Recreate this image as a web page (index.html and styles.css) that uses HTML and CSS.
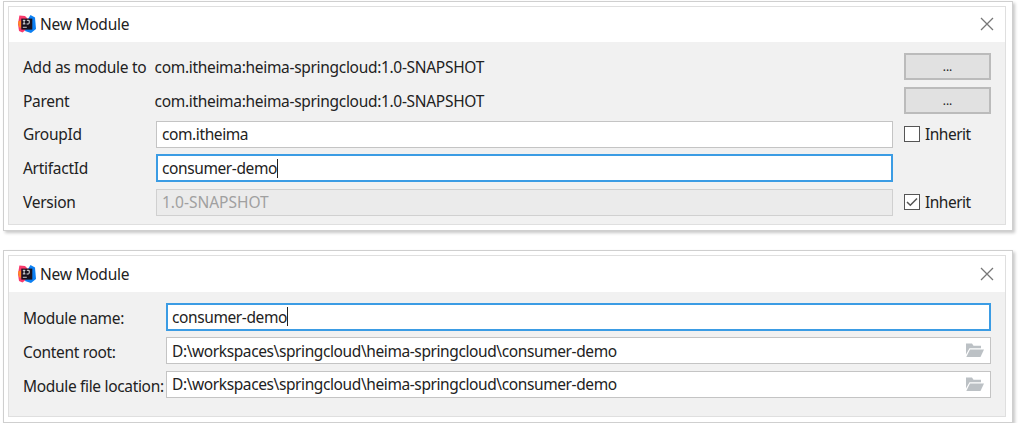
FILE: index.html
```html
<!DOCTYPE html>
<html lang="en">
<head>
<meta charset="utf-8">
<title>New Module</title>
<link rel="stylesheet" href="styles.css">
</head>
<body>
<svg class="defs" width="0" height="0">
  <symbol id="logo" viewBox="0 0 18 18">
    <path fill="#fa3a6c" d="M1.400.5 7 1l4 4-1 8-5.500 4.500L1 16 0 9z"/>
    <path fill="#ff8a24" d="M0 6.500 3 5.500V13L1 12z"/>
    <path fill="#0c7ff2" d="M12.500 0 17 2.500 18 14l-5 4-6-2 3-12z"/>
    <path fill="#16101c" d="M3.300 3.600h11v11h-11z"/>
    <path fill="none" stroke="#fff" stroke-width=".9" d="M4.800 5.300h2.600M6.100 5.300v3.600M4.800 8.900h2.600M8.800 5.300h2.400v2.800q0 .9-1 .9H8.600"/>
    <path fill="#ddd" d="M4.800 11.800h4v.9h-4z"/>
  </symbol>
  <symbol id="close" viewBox="0 0 14 14">
    <path fill="none" stroke="#777" stroke-width="1.300" d="m1 1 12 12M13 1 1 13"/>
  </symbol>
  <symbol id="folder" viewBox="0 0 19 15">
    <path fill="#bcc1c5" d="M1 .5h6l1.500 2.300H16v2.400H4.500L1 11.500z"/>
    <path fill="#bcc1c5" d="M5 6.500h14L15.500 14H1.300z"/>
  </symbol>
</svg>
<main class="page">
  <section class="dialog dialog-artifact">
    <div class="window">
      <header class="titlebar">
        <svg class="logo"><use href="#logo"/></svg>
        <h1 class="title">New Module</h1>
        <svg class="close"><use href="#close"/></svg>
      </header>
      <div class="form">
        <div class="row"><span class="label">Add as module to</span><span class="value">com.itheima:heima-springcloud:1.0-SNAPSHOT</span><button class="more">...</button></div>
        <div class="row"><span class="label">Parent</span><span class="value">com.itheima:heima-springcloud:1.0-SNAPSHOT</span><button class="more">...</button></div>
        <div class="row"><span class="label">GroupId</span><div class="field">com.itheima</div><div class="check"><span class="box"></span>Inherit</div></div>
        <div class="row"><span class="label">ArtifactId</span><div class="field focused">consumer-demo<i class="caret"></i></div><div class="check"></div></div>
        <div class="row"><span class="label">Version</span><div class="field disabled">1.0-SNAPSHOT</div><div class="check"><span class="box"><svg class="tick" viewBox="0 0 14 14"><path fill="none" stroke="#555" stroke-width="1.500" d="m2 7 3.300 3.300L12 3.500"/></svg></span>Inherit</div></div>
      </div>
    </div>
  </section>
  <section class="dialog dialog-location">
    <div class="window">
      <header class="titlebar">
        <svg class="logo"><use href="#logo"/></svg>
        <h1 class="title">New Module</h1>
        <svg class="close"><use href="#close"/></svg>
      </header>
      <div class="form">
        <div class="row"><span class="label">Module name:</span><div class="field focused">consumer-demo<i class="caret"></i></div></div>
        <div class="row"><span class="label">Content root:</span><div class="field"><span class="path">D:\workspaces\springcloud\heima-springcloud\consumer-demo</span><svg class="folder"><use href="#folder"/></svg></div></div>
        <div class="row"><span class="label">Module file location:</span><div class="field"><span class="path">D:\workspaces\springcloud\heima-springcloud\consumer-demo</span><svg class="folder"><use href="#folder"/></svg></div></div>
      </div>
    </div>
  </section>
</main>
</body>
</html>
```

FILE: styles.css
```css
* { box-sizing: border-box; }
body {
  margin: 0;
  background: #fff;
  color: #222;
  font: 15.5px/20px "Noto Sans", "Open Sans", sans-serif;
  overflow: hidden;
}
.defs { position: absolute; }
.page { display: flex; flex-direction: column; gap: 19px; padding: 1px 9px 0 3px; }
.dialog {
  border: 1px solid #cfcfcf;
  padding: 4px 6px 5px 4px;
  background: #fff;
  box-shadow: 2px 2px 3px rgba(0, 0, 0, .22);
}
.dialog-artifact { height: 230px; }
.dialog-location { height: 173px; }
.window { height: 100%; border: 1px solid #dfdfdf; background: #f1f1f1; }
.titlebar { display: flex; align-items: center; height: 35px; padding: 0 11px 2px 9px; background: #fff; }
.dialog-location .titlebar { height: 36px; padding-bottom: 1px; }
.logo { width: 18px; height: 18px; }
.title { flex: 1; margin: 0 0 0 4px; font-size: 15.500px; font-weight: 400; letter-spacing: -.25px; }
.close { width: 14px; height: 14px; }
.form { display: flex; flex-direction: column; gap: 6px; padding: 11px 14px 0 14px; }
.row { display: flex; align-items: center; height: 27.800px; white-space: nowrap; }
.label { flex: none; width: 133px; letter-spacing: -.28px; }
.value { flex: 1; margin-left: -1.500px; letter-spacing: -.31px; }
.field {
  display: flex;
  align-items: center;
  flex: 1;
  height: 27px;
  padding: 0 6px 0 5px;
  border: 1px solid #c4c4c4;
  background: #fff;
  letter-spacing: -.4px;
}
.focused { height: 28px; padding-left: 4px; border: 2px solid #3b9ce4; }
.disabled { border-color: #d0d0d0; background: #ebebeb; color: #a0a0a0; letter-spacing: 0; }
.caret { width: 1px; height: 19px; background: #222; }
.more {
  width: 87px;
  height: 27px;
  padding: 0;
  border: 2px solid #bbb;
  background: #e1e1e1;
  color: #222;
  font: 12px/20px "Noto Sans", sans-serif;
}
.check { display: flex; align-items: center; width: 98px; padding-left: 11px; gap: 5px; letter-spacing: -.5px; }
.box { width: 16px; height: 16px; border: 1px solid #555; background: #fff; }
.tick { display: block; width: 14px; height: 14px; }
.dialog-location .label { width: 143px; padding-top: 3px; letter-spacing: -.33px; }
.path { flex: 1; }
.folder { width: 19px; height: 15px; }
```
